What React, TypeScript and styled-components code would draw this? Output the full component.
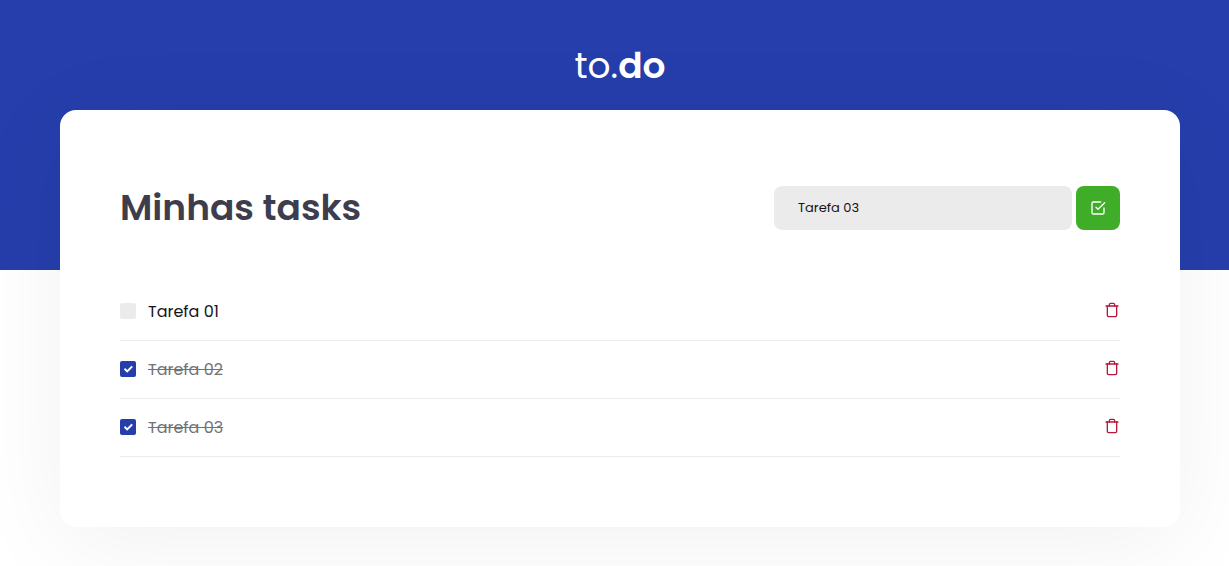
import React, { useState } from 'react';
import styled, { createGlobalStyle } from 'styled-components';
import { FiCheckSquare, FiTrash } from 'react-icons/fi';

const GlobalStyle = createGlobalStyle`
  * {
    margin: 0;
    padding: 0;
    box-sizing: border-box;
  }

  body {
    background: #fff;
    color: #15131d;
    font-family: Poppins, Inter, sans-serif;
    font-size: 16px;
    -webkit-font-smoothing: antialiased;
  }

  button {
    cursor: pointer;
    border: 0;
  }
`;

const Page = styled.div`
  min-height: 100vh;
  overflow: hidden;
  padding: 0 49px 39px 60px;
  background: linear-gradient(#253eab 270px, #fff 270px);
`;

const Header = styled.header`
  display: flex;
  align-items: center;
  justify-content: center;
  height: 110px;
  padding-top: 22px;
`;

const Logo = styled.h1`
  color: #fff;
  font-size: 36px;
  font-weight: 400;
  line-height: 48px;

  strong {
    font-weight: 600;
  }
`;

const Card = styled.main`
  max-width: 1120px;
  margin: 0 auto;
  padding: 76px 60px 70px;
  border-radius: 16px;
  background: #fff;
  box-shadow: 0 16px 100px rgba(0, 0, 0, 0.06);
`;

const CardHeader = styled.div`
  display: flex;
  align-items: center;
  justify-content: space-between;
`;

const Title = styled.h2`
  color: #3d3d4d;
  font-size: 36px;
  font-weight: 600;
  line-height: 44px;
`;

const TaskForm = styled.form`
  display: flex;
  gap: 4px;
`;

const TaskInput = styled.input`
  width: 298px;
  height: 44px;
  padding: 0 24px;
  border: 0;
  border-radius: 8px;
  background: #ebebeb;
  color: #15131d;
  font-family: inherit;
  font-size: 13px;
  outline: 0;
`;

const AddButton = styled.button`
  display: flex;
  align-items: center;
  justify-content: center;
  width: 44px;
  height: 44px;
  border-radius: 8px;
  background: #3fad27;
  color: #fff;
`;

const TaskList = styled.ul`
  margin-top: 53px;
  list-style: none;
`;

const TaskItem = styled.li`
  display: flex;
  align-items: center;
  justify-content: space-between;
  height: 58px;
  border-bottom: 1px solid #ebebeb;
`;

const TaskLabel = styled.label<{ $done: boolean }>`
  display: flex;
  align-items: center;
  gap: 12px;
  line-height: 24px;
  cursor: pointer;
  color: ${({ $done }) => ($done ? '#737277' : '#15131d')};

  span {
    text-decoration: ${({ $done }) => ($done ? 'line-through' : 'none')};
  }
`;

const Tick = styled.svg`
  grid-area: 1 / 1;
  width: 16px;
  height: 16px;
  pointer-events: none;
`;

const CheckBox = styled.div`
  display: grid;
  padding-bottom: 2px;

  input {
    grid-area: 1 / 1;
    appearance: none;
    width: 16px;
    height: 16px;
    border-radius: 2px;
    background: #ebebeb;
    cursor: pointer;
  }

  input:checked {
    background: #253eab;
  }
`;

const RemoveButton = styled.button`
  display: flex;
  padding-bottom: 4px;
  background: transparent;
  color: #b3193a;
`;

interface Task {
  id: number;
  title: string;
  done: boolean;
}

const initialTasks: Task[] = [
  { id: 1, title: 'Tarefa 01', done: false },
  { id: 2, title: 'Tarefa 02', done: true },
  { id: 3, title: 'Tarefa 03', done: true },
];

export default function App() {
  const [tasks, setTasks] = useState(initialTasks);
  const [title, setTitle] = useState('Tarefa 03');

  const addTask = (event: React.FormEvent) => {
    event.preventDefault();
    if (!title) return;
    setTasks([...tasks, { id: Date.now(), title, done: false }]);
  };

  const toggleTask = (id: number) =>
    setTasks(tasks.map((task) => (task.id === id ? { ...task, done: !task.done } : task)));

  const removeTask = (id: number) => setTasks(tasks.filter((task) => task.id !== id));

  return (
    <>
      <GlobalStyle />
      <Page>
        <Header>
          <Logo>
            to.<strong>do</strong>
          </Logo>
        </Header>
        <Card>
          <CardHeader>
            <Title>Minhas tasks</Title>
            <TaskForm onSubmit={addTask}>
              <TaskInput
                type="text"
                aria-label="Adicionar novo todo"
                value={title}
                onChange={(event) => setTitle(event.target.value)}
              />
              <AddButton type="submit" aria-label="Adicionar">
                <FiCheckSquare size={16} />
              </AddButton>
            </TaskForm>
          </CardHeader>
          <TaskList>
            {tasks.map((task) => (
              <TaskItem key={task.id}>
                <TaskLabel $done={task.done}>
                  <CheckBox>
                    <input type="checkbox" checked={task.done} onChange={() => toggleTask(task.id)} />
                    {task.done && (
                      <Tick viewBox="0 0 16 16" fill="none" stroke="#fff" strokeWidth="2">
                        <path d="M4.5 7.7 7.2 10.4 12.2 5.4" />
                      </Tick>
                    )}
                  </CheckBox>
                  <span>{task.title}</span>
                </TaskLabel>
                <RemoveButton type="button" aria-label="Remover" onClick={() => removeTask(task.id)}>
                  <FiTrash size={16} />
                </RemoveButton>
              </TaskItem>
            ))}
          </TaskList>
        </Card>
      </Page>
    </>
  );
}
